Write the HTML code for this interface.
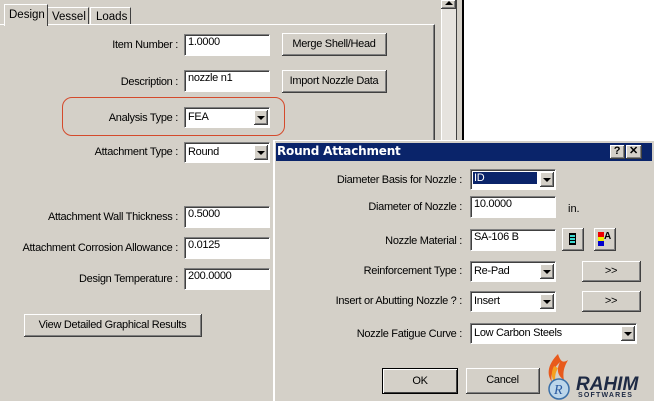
<!DOCTYPE html>
<html><head><style>
body{margin:0;width:654px;height:401px;overflow:hidden;background:#d4d0c8;position:relative;font-family:"Liberation Sans",sans-serif;font-size:11px;color:#000}
.a{position:absolute}
.lbl{position:absolute;text-align:right;white-space:nowrap;letter-spacing:-0.3px}
.in{position:absolute;background:#fff;border-top:1px solid #808080;border-left:1px solid #808080;border-right:1px solid #fff;border-bottom:1px solid #fff;box-shadow:inset 1px 1px 0 #404040;box-sizing:border-box;padding:1px 3px;letter-spacing:-0.3px;white-space:nowrap}
.cb{padding:3px 3px}
.dd{position:absolute;right:1px;top:2px;bottom:2px;width:14px;background:#d4d0c8;border-right:1px solid #404040;border-bottom:1px solid #404040;box-shadow:inset 1px 1px 0 #fff,inset -1px -1px 0 #808080;box-sizing:border-box}
.dd:after{content:"";position:absolute;left:3px;top:6px;border-left:4px solid transparent;border-right:4px solid transparent;border-top:4px solid #000}
.btn{position:absolute;background:#d4d0c8;border-right:1px solid #404040;border-bottom:1px solid #404040;box-shadow:inset 1px 1px 0 #fff,inset -1px -1px 0 #808080;box-sizing:border-box;text-align:center;white-space:nowrap;letter-spacing:-0.3px}
</style></head><body>
<div class="a" style="left:462px;top:0;width:2px;height:140px;background:#000"></div>
<div class="a" style="left:464px;top:0;width:190px;height:140px;background:#fff"></div>
<div class="a" style="left:441px;top:0;width:15px;height:140px;background:#e6e3de;border-right:1px solid #404040"></div>
<div class="btn" style="left:441px;top:0;width:15px;height:9px"></div>
<div class="a" style="left:445px;top:1px;border-left:4px solid transparent;border-right:4px solid transparent;border-bottom:4px solid #000"></div>
<div class="a" style="left:441px;top:9px;width:1px;height:131px;background:#fff"></div>
<div class="a" style="left:0;top:24px;width:434px;height:360px;border-top:1px solid #fff;border-right:1px solid #404040;box-shadow:inset -1px 0 0 #808080"></div>
<div class="a" style="left:48px;top:7px;width:41px;height:17px;border-top:1px solid #fff;border-right:1px solid #404040;box-sizing:border-box;padding:3px 4px;font-size:11.5px">Vessel</div>
<div class="a" style="left:90px;top:7px;width:41px;height:17px;border-top:1px solid #fff;border-left:1px solid #fff;border-right:1px solid #404040;box-sizing:border-box;padding:3px 5px;font-size:11.5px">Loads</div>
<div class="a" style="left:4px;top:4px;width:44px;height:22px;background:#d4d0c8;border-top:1px solid #fff;border-left:1px solid #fff;border-right:1px solid #404040;box-sizing:border-box;padding:4px 4px;font-size:11.5px">Design</div>

<div class="lbl" style="right:476px;top:39px">Item Number :</div>
<div class="in" style="left:184px;top:34px;width:86px;height:22px">1.0000</div>
<div class="btn" style="left:282px;top:33px;width:105px;height:23px;padding-top:5px">Merge Shell/Head</div>
<div class="lbl" style="right:476px;top:76px">Description :</div>
<div class="in" style="left:184px;top:70px;width:86px;height:22px">nozzle n1</div>
<div class="btn" style="left:282px;top:70px;width:105px;height:23px;padding-top:5px">Import Nozzle Data</div>

<div class="a" style="left:62px;top:97px;width:223px;height:39px;border:1.5px solid #d44a2c;border-radius:10px;box-sizing:border-box"></div>
<div class="lbl" style="right:476px;top:112px">Analysis Type :</div>
<div class="in cb" style="left:184px;top:107px;width:86px;height:21px">FEA<div class="dd"></div></div>
<div class="lbl" style="right:476px;top:146px">Attachment Type :</div>
<div class="in cb" style="left:184px;top:142px;width:86px;height:21px">Round<div class="dd"></div></div>

<div class="lbl" style="right:476px;top:211px">Attachment Wall Thickness :</div>
<div class="in" style="left:184px;top:206px;width:86px;height:22px">0.5000</div>
<div class="lbl" style="right:476px;top:242px">Attachment Corrosion Allowance :</div>
<div class="in" style="left:184px;top:237px;width:86px;height:22px">0.0125</div>
<div class="lbl" style="right:476px;top:273px">Design Temperature :</div>
<div class="in" style="left:184px;top:268px;width:86px;height:22px">200.0000</div>
<div class="btn" style="left:24px;top:314px;width:178px;height:23px;padding-top:5px">View Detailed Graphical Results</div>

<div class="a" style="left:273px;top:140px;width:381px;height:261px;background:#d4d0c8;border-left:1px solid #fff;box-shadow:inset 1px 1px 0 #fff;box-sizing:border-box"></div>
<div class="a" style="left:276px;top:143px;width:376px;height:18px;background:#0a246a"></div>
<div class="a" style="left:277px;top:144px;color:#fff;font-weight:bold;font-size:12px;font-family:'DejaVu Sans',sans-serif;letter-spacing:-0.2px">Round Attachment</div>
<div class="btn" style="left:610px;top:145px;width:15px;height:14px;font-weight:bold;line-height:13px">?</div>
<div class="btn" style="left:626px;top:145px;width:16px;height:14px;font-weight:bold;line-height:13px">✕</div>

<div class="lbl" style="right:192px;top:174px">Diameter Basis for Nozzle :</div>
<div class="in cb" style="left:470px;top:169px;width:86px;height:21px"><span style="background:#0a246a;color:#fff;display:block;width:62px;margin:-1px -1px;padding:0 1px">ID</span><div class="dd"></div></div>
<div class="lbl" style="right:192px;top:201px">Diameter of Nozzle :</div>
<div class="in" style="left:470px;top:196px;width:86px;height:22px">10.0000</div>
<div class="a" style="left:568px;top:203px">in.</div>
<div class="lbl" style="right:192px;top:235px">Nozzle Material :</div>
<div class="in" style="left:470px;top:229px;width:86px;height:22px">SA-106 B</div>
<div class="btn" style="left:562px;top:228px;width:22px;height:23px"><div class="a" style="left:7px;top:5px;width:7px;height:12px;background:#3cd8d0;border:1px solid #000;box-sizing:border-box;background-image:linear-gradient(#000 1px,transparent 1px);background-size:100% 3px"></div></div>
<div class="btn" style="left:594px;top:228px;width:22px;height:23px"><div class="a" style="left:4px;top:4px;width:6px;height:5px;background:#e00"></div><div class="a" style="left:4px;top:9px;width:6px;height:4px;background:#ee0"></div><div class="a" style="left:4px;top:13px;width:6px;height:5px;background:#00c"></div><div class="a" style="left:10px;top:3px;font-size:10px;font-weight:bold">A</div></div>
<div class="lbl" style="right:192px;top:265px">Reinforcement Type :</div>
<div class="in cb" style="left:470px;top:261px;width:86px;height:21px">Re-Pad<div class="dd"></div></div>
<div class="btn" style="left:582px;top:261px;width:59px;height:21px;padding-top:4px">&gt;&gt;</div>
<div class="lbl" style="right:192px;top:295px">Insert or Abutting Nozzle ? :</div>
<div class="in cb" style="left:470px;top:291px;width:86px;height:21px">Insert<div class="dd"></div></div>
<div class="btn" style="left:582px;top:291px;width:59px;height:21px;padding-top:4px">&gt;&gt;</div>
<div class="lbl" style="right:192px;top:328px">Nozzle Fatigue Curve :</div>
<div class="in cb" style="left:470px;top:323px;width:167px;height:21px">Low Carbon Steels<div class="dd"></div></div>
<div class="btn" style="left:382px;top:368px;width:76px;height:26px;padding-top:6px;border:1px solid #000;box-shadow:inset 1px 1px 0 #fff,inset -1px -1px 0 #404040">OK</div>
<div class="btn" style="left:466px;top:368px;width:74px;height:26px;padding-top:6px">Cancel</div>
<svg class="a" style="left:544px;top:352px" width="30" height="49" viewBox="0 0 30 49"><path d="M14 2 C4 12 2 22 8 30 C6 22 10 16 16 10 C12 18 14 24 20 28 C18 18 22 12 24 8 C18 12 16 8 14 2Z" fill="#e85a1c"/><path d="M10 14 C6 22 8 28 12 32 C10 24 12 20 14 16Z" fill="#f5a020"/><circle cx="15" cy="37" r="10" fill="#bcd6ea" stroke="#3a6fa8" stroke-width="1.5"/><text x="10" y="42" font-family="Liberation Serif,serif" font-style="italic" font-size="14" fill="#2a5aa0">R</text></svg>
<div class="a" style="left:576px;top:374px;font-weight:bold;font-style:italic;font-size:19px;color:#1e2a44">RAHIM</div>
<div class="a" style="left:578px;top:392px;font-size:7px;font-weight:bold;color:#1e2a44;letter-spacing:1.2px">SOFTWARES</div>
</body></html>
